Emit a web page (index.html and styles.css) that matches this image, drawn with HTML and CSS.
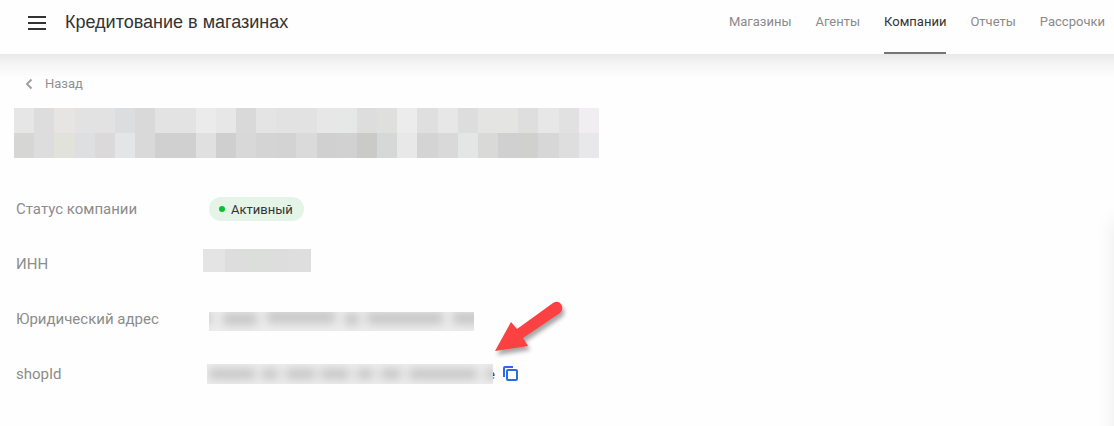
FILE: index.html
```html
<!DOCTYPE html>
<html lang="ru">
<head>
    <meta charset="UTF-8">
    <meta name="viewport" content="width=device-width, initial-scale=1.0">
    <title>Кредитование в магазинах</title>
    <link rel="stylesheet" href="styles.css">
</head>
<body>
    <header class="header">
        <button class="menu-button" type="button" aria-label="Меню">
            <span></span>
            <span></span>
            <span></span>
        </button>
        <h1 class="header-title">Кредитование в магазинах</h1>
        <nav class="nav">
            <a href="#shops">Магазины</a>
            <a href="#agents">Агенты</a>
            <a href="#companies" class="active">Компании</a>
            <a href="#reports">Отчеты</a>
            <a href="#installments">Рассрочки</a>
        </nav>
    </header>

    <main class="content">
        <a class="back" href="#back">
            <svg width="8" height="12" viewBox="0 0 8 12" aria-hidden="true"><path d="M6.500 1.500 2 6l4.500 4.500" fill="none" stroke="#a0a0a0" stroke-width="2"/></svg>
            Назад
        </a>

        <!-- название компании скрыто -->
        <svg class="company-name" id="company-name" viewBox="0 0 29 2" preserveAspectRatio="none" shape-rendering="crispEdges" aria-hidden="true"></svg>

        <dl class="details">
            <div class="row">
                <dt>Статус компании</dt>
                <dd><span class="badge">Активный</span></dd>
            </div>
            <div class="row">
                <dt>ИНН</dt>
                <dd><svg class="inn" id="inn" viewBox="0 0 5 1" preserveAspectRatio="none" shape-rendering="crispEdges" aria-hidden="true"></svg></dd>
            </div>
            <div class="row">
                <dt>Юридический адрес</dt>
                <dd>
                    <svg class="address" viewBox="0 0 265 19" aria-hidden="true">
                        <defs>
                            <filter id="soft" filterUnits="userSpaceOnUse" x="-20" y="-20" width="330" height="60" color-interpolation-filters="sRGB"><feGaussianBlur stdDeviation="5 4"/></filter>
                        </defs>
                        <rect width="265" height="19" fill="#ededed"/>
                        <g filter="url(#soft)" stroke="#c8c8c8" stroke-width="13">
                            <path d="M-8 6h10M14 7h34M58 5h68M136 7h14M158 6h76M244 6h30"/>
                        </g>
                    </svg>
                </dd>
            </div>
            <div class="row">
                <dt>shopId</dt>
                <dd class="shop-id">
                    <svg class="shop-value" viewBox="0 0 286 20" aria-hidden="true">
                        <rect width="286" height="20" fill="#ededed"/>
                        <g filter="url(#soft)" stroke="#c8c8c8" stroke-width="11">
                            <path d="M2 10h46M55 10h16M79 10h29M114 10h28M150 10h16M174 10h20M202 10h68M279 10h12"/>
                        </g>
                    </svg>
                    <span class="tail">e</span>
                    <button class="copy" type="button" aria-label="Скопировать shopId">
                        <svg width="16" height="16" viewBox="0 0 16 16" aria-hidden="true">
                            <path d="M1 11V2a1 1 0 0 1 1-1h8" fill="none" stroke="#2b6be4" stroke-width="2"/>
                            <rect x="4" y="4" width="10" height="10" rx="1" fill="none" stroke="#2b6be4" stroke-width="2"/>
                        </svg>
                    </button>
                    <svg class="arrow" width="80" height="66" viewBox="0 0 80 66" aria-hidden="true">
                        <path d="M5 56 21 27l6 7L63 8q5-3 8 1 3 5-1 9L33 43l5 8z" fill="#fb4141"/>
                    </svg>
                </dd>
            </div>
        </dl>
    </main>

    <script>
        const nameColors = [
            ['e4e4e4', 'dadada', 'e4e3e2', 'dfdfdf', 'dfdfdf', 'd9dadb', 'd5d5d5', 'e1e1e1', 'e1e1e1', 'e9eaea', 'e5e5e5', 'd7d6d7', 'e2e2e2', 'e0e0e0', 'dfdfdf', 'e5e5e5', 'e4e5e5', 'dadadb', 'dcddda', 'ebebeb', 'dcdcdc', 'e5e5e5', 'dadada', 'e2e2e1', 'e2e2e1', 'dbdbdb', 'e5e5e5', 'dedede', 'efedef'],
            ['d2d2d1', 'dadada', 'dfdfda', 'dadcdd', 'd8d5d5', 'e1e3e4', 'd5d5d5', 'cccccc', 'cccccc', 'dddddd', 'cacaca', 'd5d4d6', 'd0d0d0', 'cfcfcf', 'd8d7d7', 'cccccc', 'cccdcc', 'c5c5c3', 'd2d3d3', 'e6e6e6', 'd0d0d0', 'd4d5d4', 'e2e4e3', 'd5d5d4', 'cccccc', 'cccdc9', 'd3d3d3', 'dcdbdc', 'e6e5e7']
        ];
        const innColors = [['e2e2e2', 'dadada', 'd9dbd8', 'dadada', 'dbdbdb']];

        function drawMosaic(id, rows) {
            document.getElementById(id).innerHTML = rows.map((row, y) =>
                row.map((color, x) => `<rect x="${x}" y="${y}" width="1" height="1" fill="#${color}"/>`).join('')
            ).join('');
        }

        drawMosaic('company-name', nameColors);
        drawMosaic('inn', innColors);
    </script>
</body>
</html>
```
FILE: styles.css
```css
* {
    box-sizing: border-box;
}
body {
    margin: 0;
    min-height: 100vh;
    font-family: Roboto, sans-serif;
    background-color: #fefefe;
    color: #333333;
    overflow-x: hidden;
}
/* shadow of the closed side panel */
body::after {
    content: "";
    position: fixed;
    top: 220px;
    bottom: -20px;
    left: 100%;
    width: 20px;
    box-shadow: 0 0 20px rgba(0, 0, 0, 0.08);
}
.header {
    display: flex;
    align-items: center;
    height: 54px;
    padding: 0 9px 0 28px;
}
.menu-button {
    display: flex;
    flex-direction: column;
    gap: 4px;
    width: 18px;
    margin: 0 19px 8px 0;
    padding: 0;
    border: none;
    background: none;
    cursor: pointer;
}
.menu-button span {
    height: 2px;
    background-color: #333333;
}
.header-title {
    margin: 0 auto 10px 0;
    font-family: "Liberation Sans", sans-serif;
    font-size: 18px;
    line-height: 24px;
    font-weight: 400;
}
.nav {
    display: flex;
    gap: 24px;
    height: 100%;
}
.nav a {
    padding-top: 12px;
    font-size: 13px;
    line-height: 20px;
    color: #8a8a8a;
    text-decoration: none;
}
.nav .active {
    color: #333333;
    border-bottom: 2px solid #757575;
}
.content {
    padding: 20px 14px;
    background: linear-gradient(#e8e8e8, #f4f4f4 9px, #fefefe 24px);
}
.back {
    display: flex;
    align-items: center;
    gap: 12px;
    width: max-content;
    margin-left: 11px;
    font-size: 13px;
    line-height: 20px;
    color: #909090;
    text-decoration: none;
}
.company-name {
    display: block;
    width: 585px;
    max-width: 100%;
    height: 50px;
    margin-top: 14px;
    opacity: 0.9;
}
.details {
    margin: 39px 0 0 2px;
}
.row {
    display: flex;
    align-items: center;
    height: 24px;
    margin-bottom: 31px;
}
.row dt {
    width: 187px;
    font-size: 15px;
    line-height: 24px;
    color: #8c8c8c;
}
.row dd {
    margin: 0;
}
.row svg {
    display: block;
}
.badge {
    display: flex;
    align-items: center;
    gap: 6px;
    height: 24px;
    margin-left: 6px;
    padding: 0 11px 0 10px;
    border-radius: 12px;
    background-color: #e4f4e7;
    font-size: 13px;
}
.badge::before {
    content: "";
    width: 6px;
    height: 6px;
    border-radius: 50%;
    background-color: #0abf30;
}
.inn {
    width: 108px;
    height: 23px;
    margin-bottom: 8px;
    opacity: 0.9;
}
.address {
    width: 265px;
    height: 19px;
    margin: 4px 0 0 6px;
}
.shop-id {
    position: relative;
    display: flex;
    align-items: center;
}
.shop-value {
    position: relative;
    z-index: 1;
    width: 286px;
    height: 20px;
    margin-left: 4px;
}
/* the hidden part of the value covers most of its last letter */
.tail {
    width: 7px;
    margin-left: -5px;
    font-size: 13px;
    color: #333333;
}
.copy {
    margin-left: 8px;
    padding: 0;
    border: none;
    background: none;
    cursor: pointer;
}
.arrow {
    position: absolute;
    left: 287px;
    bottom: 23px;
    filter: drop-shadow(2px 4px 2px rgba(0, 0, 0, 0.35));
}
```
